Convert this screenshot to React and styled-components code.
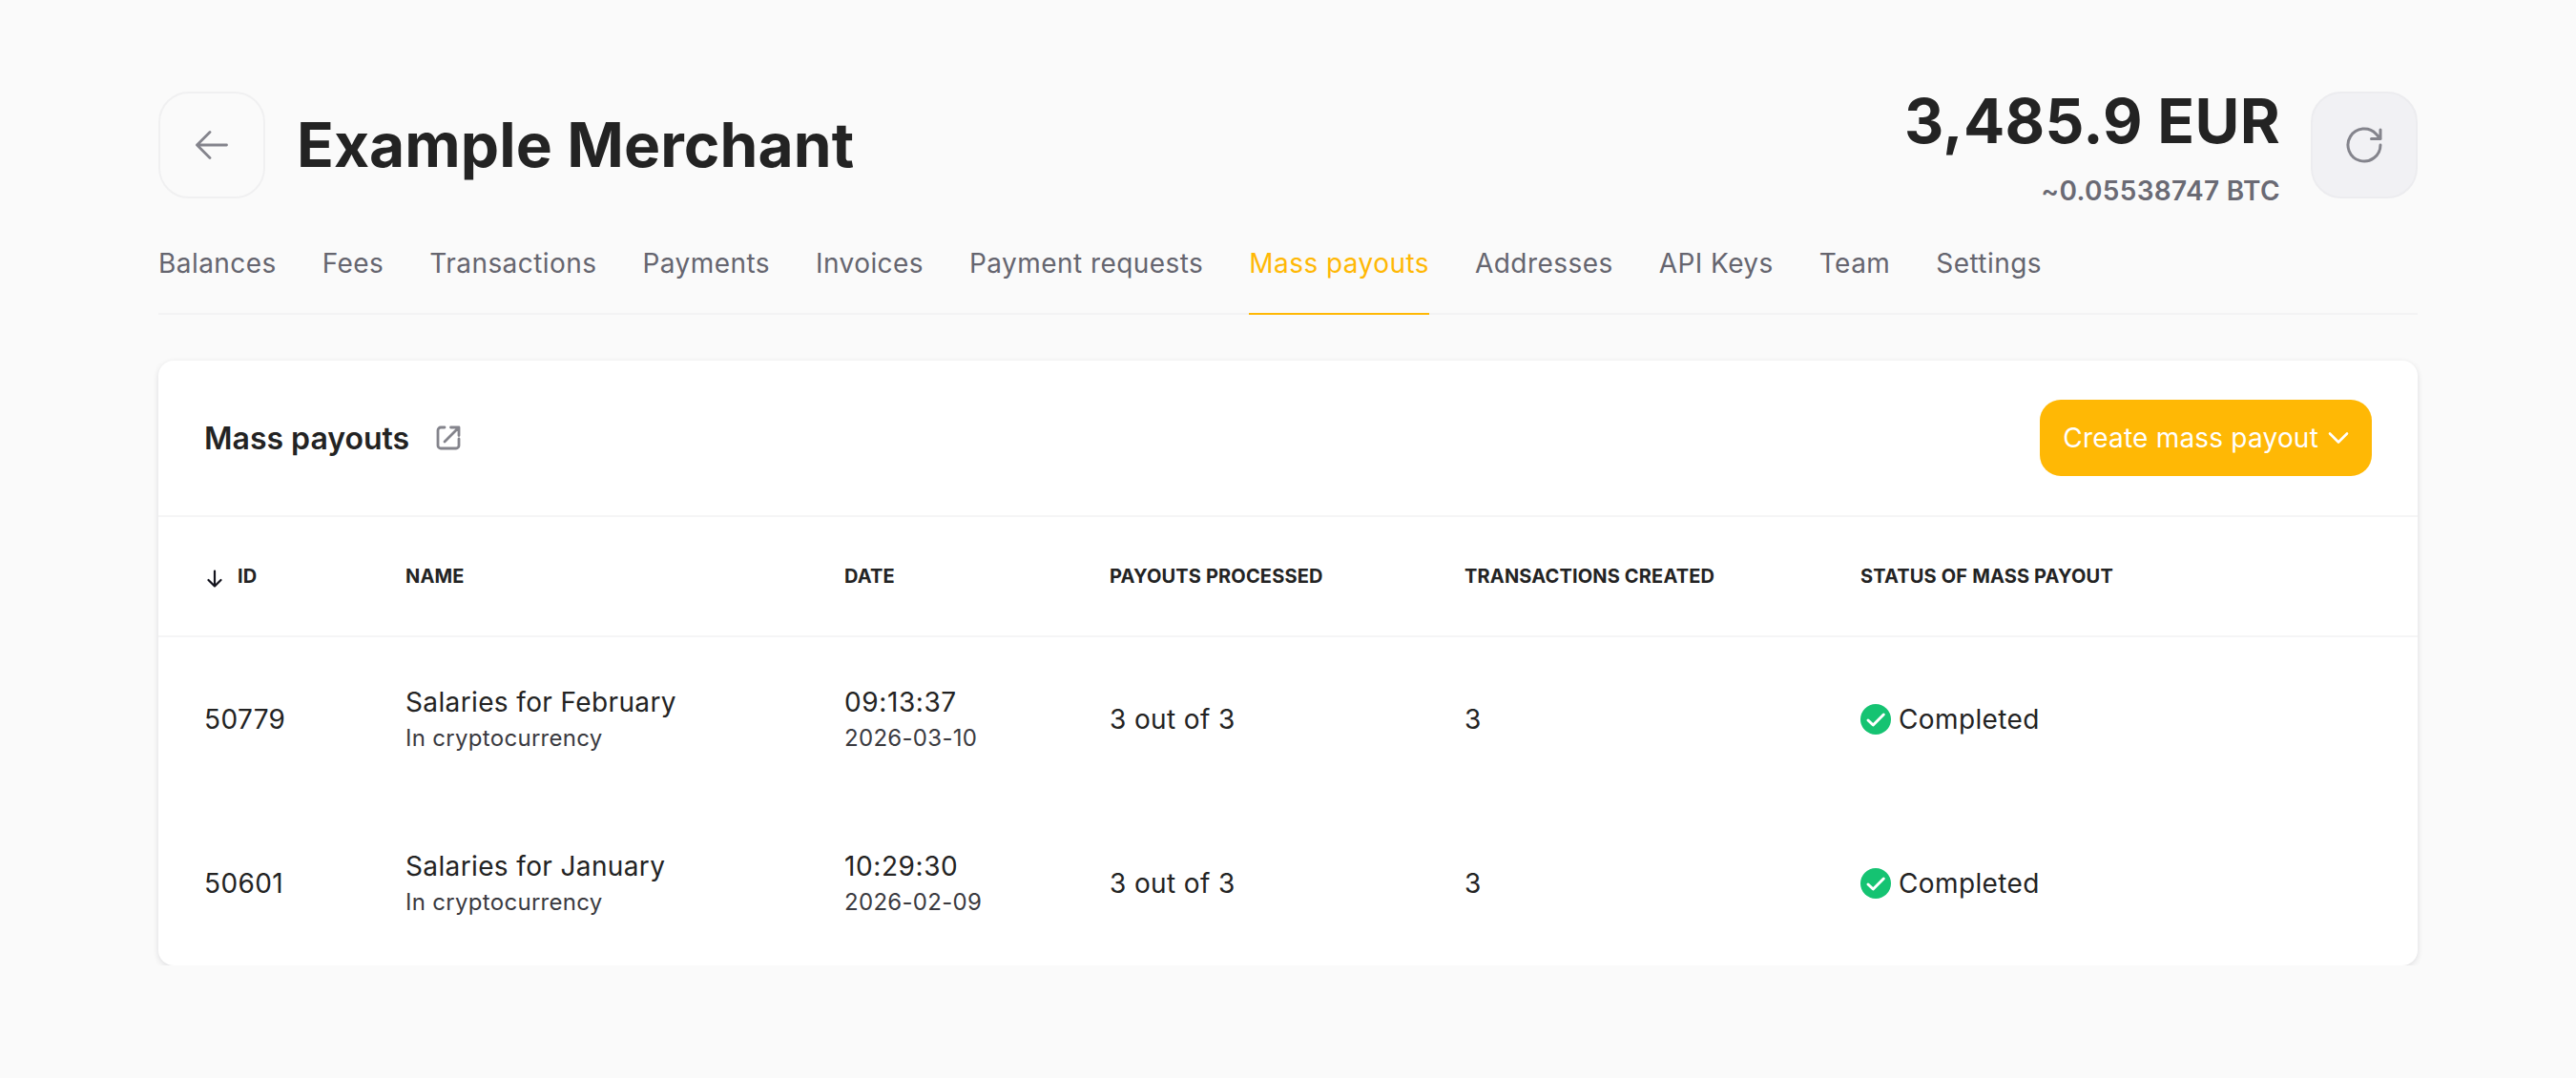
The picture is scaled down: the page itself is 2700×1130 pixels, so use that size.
import React from 'react';
import styled, { createGlobalStyle } from 'styled-components';

const Global = createGlobalStyle`
  html, body { margin: 0; padding: 0; background: #fafafa; }
  body { font-family: Inter, "Liberation Sans", sans-serif; color: #232323; }
`;

const Page = styled.div`
  width: 2368px;
  margin: 0 auto;
  padding-top: 96px;
`;

const Header = styled.header`
  display: flex;
  align-items: flex-start;
  justify-content: space-between;
`;

const TitleGroup = styled.div`
  display: flex;
  align-items: center;
  gap: 33px;
`;

const BalanceGroup = styled.div`
  display: flex;
  align-items: flex-start;
  gap: 32px;
`;

const IconButton = styled.button`
  width: 112px;
  height: 112px;
  padding: 0;
  display: flex;
  align-items: center;
  justify-content: center;
  border-radius: 32px;
  border: 2px solid ${p => (p.$filled ? '#ececef' : '#f0f0f1')};
  background: ${p => (p.$filled ? '#f1f1f4' : '#fafafa')};
  color: #84848c;
`;

const Title = styled.h1`
  margin: 0;
  font-size: 64px;
  line-height: 80px;
  font-weight: 700;
  letter-spacing: 0.1px;
  color: #232323;
`;

const Balance = styled.div`
  text-align: right;
`;

const Amount = styled.div`
  font-size: 64px;
  line-height: 64px;
  margin-top: -1px;
  font-weight: 700;
  letter-spacing: 0.3px;
  color: #232323;
`;

const Approx = styled.div`
  font-size: 28px;
  line-height: 36px;
  margin-top: 23px;
  font-weight: 600;
  letter-spacing: 0.35px;
  color: #6a6a74;
`;

const Tabs = styled.nav`
  display: flex;
  gap: 48px;
  margin-top: 34px;
  border-bottom: 2px solid #f3f3f4;
`;

const Tab = styled.a`
  display: block;
  padding: 10px 0 38px;
  margin-bottom: -2px;
  font-size: 28px;
  line-height: 28px;
  font-weight: 400;
  letter-spacing: 0.44px;
  color: ${p => (p.$active ? '#ffb805' : '#65656f')};
  border-bottom: 2px solid ${p => (p.$active ? '#ffb805' : 'transparent')};
`;

const Card = styled.section`
  margin-top: 48px;
  background: #fff;
  border-radius: 16px;
  box-shadow: 0 2px 6px rgba(20, 20, 30, 0.12);
  overflow: hidden;
`;

const CardHead = styled.div`
  display: flex;
  align-items: center;
  justify-content: space-between;
  height: 162px;
  padding: 0 48px;
  border-bottom: 2px solid #f5f5f6;
`;

const CardTitle = styled.div`
  display: flex;
  align-items: center;
  gap: 28px;
  font-size: 32px;
  font-weight: 600;
  color: #232323;
`;

const ExtLink = styled.span`
  display: flex;
  color: #84848c;
`;

const CreateButton = styled.button`
  display: flex;
  align-items: center;
  gap: 10px;
  height: 80px;
  padding: 0 24px;
  border: 0;
  border-radius: 22px;
  background: #ffb805;
  color: #fff;
  font: 400 28px Inter, sans-serif;
  letter-spacing: 0.2px;
`;

const Row = styled.div`
  display: grid;
  grid-template-columns: 211px 460px 278px 372px 415px 1fr;
  align-items: center;
  padding-left: 48px;
  height: ${p => (p.$head ? '124px' : '172px')};
  ${p => p.$head && 'border-bottom: 2px solid #f5f5f6;'}
`;

const HeadCell = styled.div`
  display: flex;
  align-items: center;
  gap: 16px;
  font-size: 20px;
  font-weight: 700;
  letter-spacing: 0.16px;
  color: #232323;
  text-transform: uppercase;
`;

const SortWrap = styled.span`
  display: flex;
  margin-left: 3px;
  margin-top: 4px;
`;

const Cell = styled.div`
  font-size: 28px;
  line-height: 36px;
  letter-spacing: 0.37px;
  color: #232323;
`;

const Time = styled.div`
  letter-spacing: 0.6px;
`;

const Sub = styled.div`
  font-size: 24px;
  line-height: 32px;
  margin-top: 4px;
  letter-spacing: 0.3px;
  color: #3a3a3f;
`;

const Status = styled(Cell)`
  display: flex;
  align-items: center;
  gap: 8px;
`;

const BackIcon = () => (
  <svg width="34" height="30" viewBox="0 0 34 30" fill="none" stroke="currentColor" strokeWidth="2.8" strokeLinecap="round" strokeLinejoin="round">
    <path d="M15 1.5 1.5 15 15 28.5M1.5 15H32.5" />
  </svg>
);

const RefreshIcon = () => (
  <svg width="40" height="40" viewBox="0 0 40 40" fill="none" stroke="currentColor" strokeWidth="3" strokeLinecap="round" strokeLinejoin="round">
    <path d="M37 20a17 17 0 1 1-4.5-11.5L37 13.5M37 4v9.5H27.5" />
  </svg>
);

const LinkIcon = () => (
  <svg width="26" height="26" viewBox="0 0 26 26" fill="none" stroke="currentColor" strokeWidth="2.8" strokeLinecap="round" strokeLinejoin="round">
    <path d="M9 2H5a3 3 0 0 0-3 3v16a3 3 0 0 0 3 3h16a3 3 0 0 0 3-3v-7M15.5 2H24v8.5M24 2 9 17" />
  </svg>
);

const Chevron = () => (
  <svg width="22" height="14" viewBox="0 0 22 14" fill="none" stroke="#fff" strokeWidth="2.6" strokeLinecap="round" strokeLinejoin="round">
    <path d="M2 2.5 11 11.5 20 2.5" />
  </svg>
);

const SortArrow = () => (
  <svg width="16" height="19" viewBox="0 0 16 19" fill="none" stroke="#14141e" strokeWidth="2.2" strokeLinecap="round" strokeLinejoin="round">
    <path d="M8 1.5v16M1.5 11l6.5 6.5 6.5-6.5" />
  </svg>
);

const CheckBadge = () => (
  <svg width="32" height="32" viewBox="0 0 32 32">
    <circle cx="16" cy="16" r="16" fill="#15c372" />
    <path d="M8 17l5.3 5 11-11" fill="none" stroke="#fff" strokeWidth="3" strokeLinecap="round" strokeLinejoin="round" />
  </svg>
);

const tabs = ['Balances', 'Fees', 'Transactions', 'Payments', 'Invoices', 'Payment requests', 'Mass payouts', 'Addresses', 'API Keys', 'Team', 'Settings'];

const rows = [
  { id: '50779', name: 'Salaries for February', time: '09:13:37', date: '2026-03-10' },
  { id: '50601', name: 'Salaries for January', time: '10:29:30', date: '2026-02-09' },
];

export default function App() {
  return (
    <>
      <Global />
      <Page>
        <Header>
          <TitleGroup>
            <IconButton aria-label="Back"><BackIcon /></IconButton>
            <Title>Example Merchant</Title>
          </TitleGroup>
          <BalanceGroup>
            <Balance>
              <Amount>3,485.9 EUR</Amount>
              <Approx>~0.05538747 BTC</Approx>
            </Balance>
            <IconButton $filled aria-label="Refresh"><RefreshIcon /></IconButton>
          </BalanceGroup>
        </Header>
        <Tabs>
          {tabs.map(t => <Tab key={t} $active={t === 'Mass payouts'}>{t}</Tab>)}
        </Tabs>
        <Card>
          <CardHead>
            <CardTitle>Mass payouts <ExtLink><LinkIcon /></ExtLink></CardTitle>
            <CreateButton>Create mass payout <Chevron /></CreateButton>
          </CardHead>
          <Row $head>
            <HeadCell><SortWrap><SortArrow /></SortWrap>ID</HeadCell>
            <HeadCell>Name</HeadCell>
            <HeadCell>Date</HeadCell>
            <HeadCell>Payouts processed</HeadCell>
            <HeadCell>Transactions created</HeadCell>
            <HeadCell>Status of mass payout</HeadCell>
          </Row>
          {rows.map(r => (
            <Row key={r.id}>
              <Cell>{r.id}</Cell>
              <Cell>{r.name}<Sub>In cryptocurrency</Sub></Cell>
              <Cell><Time>{r.time}</Time><Sub>{r.date}</Sub></Cell>
              <Cell>3 out of 3</Cell>
              <Cell>3</Cell>
              <Status><CheckBadge />Completed</Status>
            </Row>
          ))}
        </Card>
      </Page>
    </>
  );
}
